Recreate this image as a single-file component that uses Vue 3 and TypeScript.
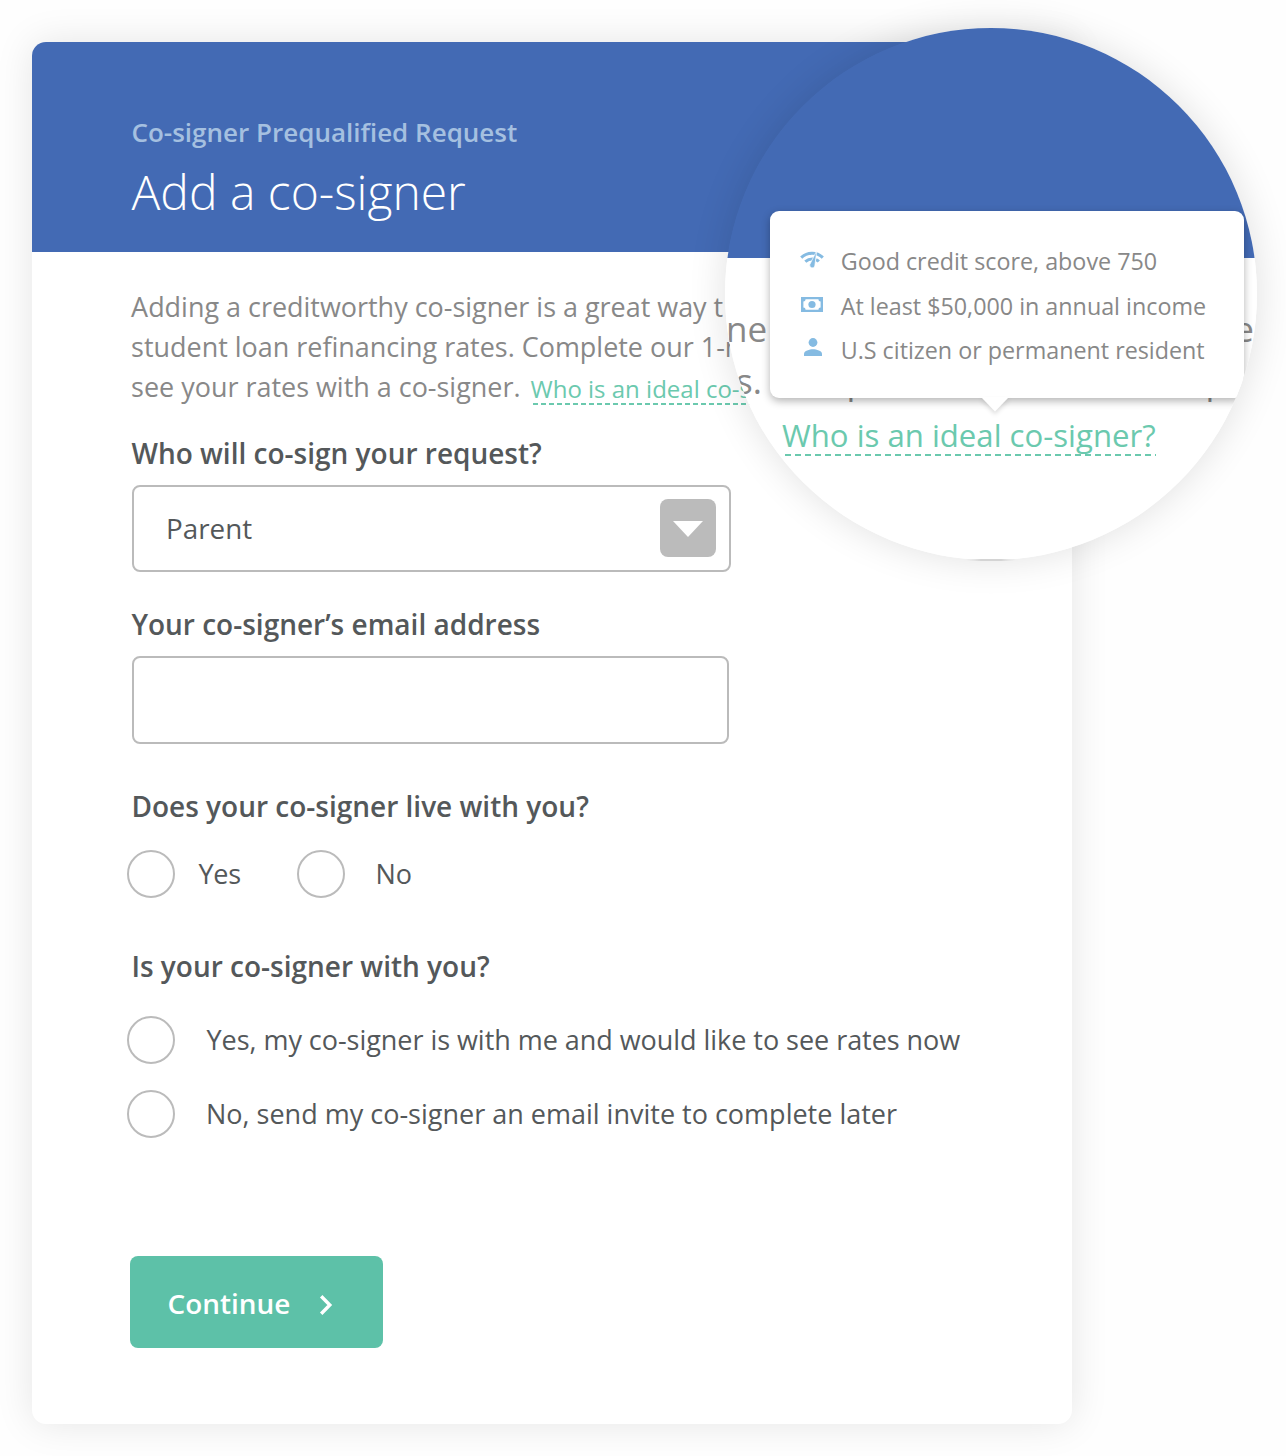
<script setup lang="ts">
import { ref } from 'vue'

const relation = ref('Parent')
const email = ref('')
const livesWith = ref('')
const isPresent = ref('')

const presenceOptions = [
  { value: 'yes', label: 'Yes, my co-signer is with me and would like to see rates now' },
  { value: 'no', label: 'No, send my co-signer an email invite to complete later' },
]
</script>

<template>
  <div class="page">
    <main class="card">
      <header class="head">
        <p class="eyebrow">Co-signer Prequalified Request</p>
        <h1 class="title">Add a co-signer</h1>
      </header>

      <form class="body" @submit.prevent>
        <div class="intro">
          <p>Adding a creditworthy co-signer is a great way t</p>
          <p>student loan refinancing rates. Complete our 1-m</p>
          <p>see your rates with a co-signer. <a class="link">Who is an ideal co-signer?</a></p>
        </div>

        <label class="label l1">Who will co-sign your request?</label>
        <div class="select">
          <span class="value">{{ relation }}</span>
          <span class="caret">
            <svg width="30" height="16" viewBox="0 0 30 16"><path d="M0 0h30L15 16z" fill="#fff" /></svg>
          </span>
        </div>

        <label class="label l2" for="email">Your co-signer’s email address</label>
        <input id="email" v-model="email" class="input" type="email" />

        <p class="label l3">Does your co-signer live with you?</p>
        <div class="inline">
          <label class="option first"><input v-model="livesWith" type="radio" value="yes" /><span>Yes</span></label>
          <label class="option second"><input v-model="livesWith" type="radio" value="no" /><span>No</span></label>
        </div>

        <p class="label l4">Is your co-signer with you?</p>
        <div class="stack">
          <label v-for="o in presenceOptions" :key="o.value" class="option" :class="o.value">
            <input v-model="isPresent" type="radio" :value="o.value" /><span>{{ o.label }}</span>
          </label>
        </div>

        <button class="button" type="submit">
          <span>Continue</span>
          <svg width="14" height="22" viewBox="0 0 14 22"><path d="M2.2 2.2l8.6 8.8-8.6 8.8" fill="none" stroke="#fff" stroke-width="3.4" /></svg>
        </button>
      </form>
    </main>

    <aside class="lens">
      <div class="lens-row r1"><span>ne</span><span>e</span></div>
      <div class="lens-row r2"><span>s. Comp</span><span>p</span></div>
      <a class="lens-link">Who is an ideal co-signer?</a>

      <div class="tip">
        <ul>
          <li>
            <svg width="24" height="18" viewBox="0 0 24 18" fill="none">
              <path d="M1.200 6.600C6.800 1.300 16.500.2 22.800 6.600" stroke="#85bbe2" stroke-width="3" />
              <path d="M5.300 10.700C8 8.300 10.500 7.500 14 8" stroke="#85bbe2" stroke-width="3" />
              <path d="M16 8.600q1.700.8 2.800 2" stroke="#85bbe2" stroke-width="3" />
              <path d="M16.800-.5L9.800 13.500a2.600 2.600 0 0 0 5 1.500z" fill="#85bbe2" stroke="#fff" stroke-width=".7" />
            </svg>
            <span>Good credit score, above 750</span>
          </li>
          <li>
            <svg width="22" height="15" viewBox="0 0 22 15">
              <path fill="#85bbe2" fill-rule="evenodd" d="M0 0h22v15H0zM4.600 2.300a2.200 2.200 0 0 1-2.200 2.200v6a2.200 2.200 0 0 1 2.200 2.200h12.800a2.200 2.200 0 0 1 2.200-2.200v-6a2.200 2.200 0 0 1-2.200-2.200z" />
              <circle cx="11" cy="7.500" r="3.600" fill="#85bbe2" />
            </svg>
            <span>At least $50,000 in annual income</span>
          </li>
          <li>
            <svg class="person" width="18" height="18" viewBox="0 0 18 18" fill="#85bbe2">
              <circle cx="9" cy="4.500" r="4.400" />
              <path d="M0 18v-2.200C0 12.800 5.500 11.200 9 11.200s9 1.600 9 4.600V18z" />
            </svg>
            <span>U.S citizen or permanent resident</span>
          </li>
        </ul>
        <svg class="tip-arrow" width="28" height="15" viewBox="0 0 28 15"><path d="M0 0h28L14 14.500z" fill="#fff" /></svg>
      </div>
    </aside>
    <div class="sliver"></div>
  </div>
</template>

<style>
body { background: #fefefe; }
</style>

<style scoped>
* { box-sizing: border-box; margin: 0; padding: 0; }
.page {
  position: relative;
  width: 1286px;
  height: 1456px;
  padding: 42px 0 0 32px;
  overflow: hidden;
  font-family: "Open Sans", "Noto Sans", sans-serif;
}
.card {
  width: 1040px;
  height: 1382px;
  border-radius: 14px;
  background: #fff;
  overflow: hidden;
  box-shadow: 0 0 38px rgba(0, 0, 0, 0.1);
}
.head {
  height: 210px;
  padding: 72px 0 0 99.500px;
  background: #436ab4;
}
.eyebrow {
  font-size: 26px;
  line-height: 36px;
  font-weight: 600;
  color: #a5c0e0;
  white-space: nowrap;
}
.title {
  margin-top: 10px;
  font-size: 48px;
  line-height: 64px;
  font-weight: 300;
  color: #fff;
  white-space: nowrap;
}
.body { padding: 35px 0 0 100px; }
.intro {
  margin-left: -0.9px;
  font-size: 26.950px;
  line-height: 40px;
  color: #888;
  white-space: nowrap;
}
.intro p { height: 40px; }
.link {
  display: inline-block;
  position: relative;
  top: 1px;
  height: 31px;
  margin-left: 3px;
  font-size: 24px;
  line-height: 29px;
  color: #6bc9ae;
  background: repeating-linear-gradient(90deg, #6bc9ae 0 5px, transparent 5px 8px) 2px 100% / 100% 2px no-repeat;
}
.label {
  display: block;
  position: relative;
  top: 0.5px;
  margin-left: -0.6px;
  font-size: 28px;
  line-height: 40px;
  font-weight: 600;
  color: #54585a;
  white-space: nowrap;
}
.l1 { margin-top: 25px; }
.l2 { margin-top: 31px; }
.l3 { margin-top: 42px; }
.l4 { margin-top: 47px; }
.select {
  display: flex;
  align-items: center;
  justify-content: space-between;
  width: 599px;
  height: 87px;
  margin: 13px 0 0;
  padding: 0 13.500px 2px 32px;
  border: 2px solid #bbb;
  border-radius: 8px;
  font-size: 27.800px;
  color: #54585a;
}
.caret {
  display: flex;
  align-items: center;
  justify-content: center;
  width: 56px;
  height: 58px;
  border-radius: 8px;
  background: #bbb;
}
.caret svg { position: relative; top: 1px; }
.input {
  display: block;
  width: 597px;
  height: 88px;
  margin: 13px 0 -1px;
  border: 2px solid #bbb;
  border-radius: 8px;
  background: #fff;
}
.inline { display: flex; margin: 25px 0 0 -5px; }
.stack {
  display: flex;
  flex-direction: column;
  gap: 26px;
  margin: 31px 0 0 -5px;
}
.option {
  display: flex;
  align-items: center;
  height: 48px;
  font-size: 27px;
  line-height: 36px;
  color: #54585a;
  white-space: nowrap;
}
.option input {
  appearance: none;
  width: 48px;
  height: 48px;
  border: 2px solid #bbb;
  border-radius: 50%;
}
.option span { margin-left: 31px; }
.option.yes span { margin-left: 31.500px; letter-spacing: -0.04px; }
.first { width: 169.500px; }
.first span { margin-left: 23.500px; letter-spacing: -0.3px; }
.button {
  display: flex;
  align-items: center;
  width: 253px;
  height: 92px;
  margin: 118px 0 0 -2.400px;
  padding: 2px 0 0 38px;
  border: 0;
  border-radius: 8px;
  background: #5dc1a8;
  color: #fff;
  font: 600 27.900px "Open Sans", sans-serif;
}
.button svg { margin-left: 29px; position: relative; top: 2px; }

.lens {
  position: absolute;
  left: 725px;
  top: 28px;
  width: 532px;
  height: 532px;
  padding-top: 275px;
  border-radius: 50%;
  background: linear-gradient(#436ab4 230px, #fff 230px);
  overflow: hidden;
  box-shadow: 0 0 38px rgba(0, 0, 0, 0.12);
}
/* faint contact shadow on the lens' lower rim */
.sliver {
  position: absolute;
  left: 966px;
  top: 559px;
  width: 50px;
  height: 2px;
  border-radius: 0 0 50% 50%;
  background: linear-gradient(90deg, transparent, #d4d4d4 30%, #d4d4d4 70%, transparent);
}
.lens-row {
  display: flex;
  justify-content: space-between;
  height: 52px;
  font-size: 35px;
  line-height: 52px;
  color: #888;
  white-space: nowrap;
}
.r1 { padding: 0 3px 0 1px; }
.r2 { padding: 0 30px 0 11px; }
.lens-link {
  display: block;
  width: 375px;
  height: 37px;
  margin: 12px 0 0 57px;
  font-size: 31.150px;
  line-height: 32px;
  color: #6bc9ae;
  white-space: nowrap;
  background: repeating-linear-gradient(90deg, #6bc9ae 0 6px, transparent 6px 10px) 3px 35px / 371px 2px no-repeat;
}
.tip {
  position: absolute;
  left: 44.500px;
  top: 183px;
  width: 474.500px;
  height: 186.500px;
  padding: 28px 0 0 31px;
  border-radius: 9px;
  background: #fff;
  box-shadow: 0 3px 9px rgba(0, 0, 0, 0.3);
}
.tip ul { list-style: none; }
.tip li {
  display: grid;
  grid-template-columns: 23px auto;
  column-gap: 17.200px;
  align-items: center;
  justify-items: start;
  height: 44.600px;
  font-size: 23.300px;
  line-height: 44px;
  color: #888;
  white-space: nowrap;
}
.tip li svg { position: relative; justify-self: center; top: -1.500px; }
.tip li svg.person { left: 1px; top: -3px; }
.tip-arrow {
  position: absolute;
  left: 211px;
  top: 186px;
  filter: drop-shadow(0 3px 2px rgba(0, 0, 0, 0.13));
}
</style>
